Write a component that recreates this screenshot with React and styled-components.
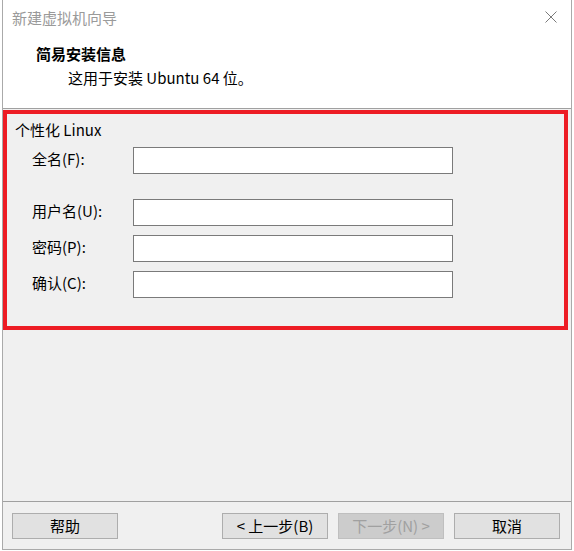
import React from "react";
import styled, { createGlobalStyle } from "styled-components";

const Global = createGlobalStyle`
  html, body { margin: 0; padding: 0; background: #ffffff; }
  body { font-family: "Noto Sans CJK SC", "Noto Sans", sans-serif; color: #000; }
  * { box-sizing: border-box; }
`;

const Window = styled.div`
  margin-left: 2px;
  width: 570px;
  height: 550px;
  display: flex;
  flex-direction: column;
  border-left: 1px solid #aaaaaa;
  border-right: 1px solid #aaaaaa;
  border-bottom: 1px solid #aaaaaa;
  background: #f0f0f0;
`;

const Header = styled.div`
  height: 109px;
  background: #ffffff;
  border-bottom: 1px solid #a0a0a0;
  display: flex;
  flex-direction: column;
`;

const TitleBar = styled.div`
  height: 36px;
  display: flex;
  align-items: center;
  justify-content: space-between;
  padding: 0 14px 0 9px;
`;

const Title = styled.div`
  font-size: 15px;
  line-height: 20px;
  color: #9a9a9a;
`;

const CloseButton = styled.div`
  width: 12px;
  height: 12px;
  display: flex;
  margin-top: -2px;
`;

const Heading = styled.div`
  margin: 8px 0 0 33px;
  font-size: 15px;
  font-weight: 700;
  line-height: 20px;
`;

const Subtitle = styled.div`
  margin: 4px 0 0 65px;
  font-size: 15px;
  line-height: 20px;
`;

const Content = styled.div`
  flex: 1;
  padding-top: 1px;
  background: #f0f0f0;
`;

const GroupBox = styled.div`
  width: 565px;
  height: 220px;
  border: 4px solid #ed1c24;
  padding: 6px 0 0 8px;
`;

const GroupTitle = styled.div`
  font-size: 15px;
  line-height: 19px;
`;

const Form = styled.div`
  margin-top: 8px;
  padding-left: 17px;
  display: grid;
  grid-template-columns: 101px 320px;
  row-gap: 9px;
`;

const Label = styled.label`
  font-size: 15px;
  line-height: 19px;
  align-self: center;
  padding-bottom: 5px;
  margin-bottom: ${(p) => (p.$spaced ? "16px" : "0")};
`;

const Input = styled.input`
  width: 320px;
  height: 27px;
  border: 1px solid #7a7a7a;
  background: #ffffff;
  margin: 0 0 ${(p) => (p.$spaced ? "16px" : "0")} 0;
  padding: 0 4px;
  font: inherit;
  font-size: 15px;
  outline: none;
`;

const Footer = styled.div`
  height: 48px;
  border-top: 1px solid #a0a0a0;
  padding: 11px 11px 0 9px;
  display: flex;
  align-items: flex-start;
  justify-content: space-between;
`;

const ButtonGroup = styled.div`
  display: flex;
  gap: 10px;
`;

const Button = styled.button`
  width: 106px;
  height: 26px;
  padding: 0;
  font-family: "Noto Sans CJK SC", "Noto Sans", sans-serif;
  font-size: 15px;
  line-height: 24px;
  background: ${(p) => (p.disabled ? "#cccccc" : "#e1e1e1")};
  border: 1px solid ${(p) => (p.disabled ? "#bfbfbf" : "#adadad")};
  color: ${(p) => (p.disabled ? "#a0a0a0" : "#000000")};
  border-radius: 0;
`;

const fields = [
  { label: "全名(F):", spaced: true },
  { label: "用户名(U):" },
  { label: "密码(P):", type: "password" },
  { label: "确认(C):", type: "password" },
];

export default function App() {
  return (
    <>
      <Global />
      <Window>
        <Header>
          <TitleBar>
            <Title>新建虚拟机向导</Title>
            <CloseButton>
              <svg width="12" height="12" viewBox="0 0 12 12">
                <path d="M0.5 0.5 L11.5 11.5 M11.5 0.5 L0.5 11.5" stroke="#7a7a7a" strokeWidth="1" fill="none" />
              </svg>
            </CloseButton>
          </TitleBar>
          <Heading>简易安装信息</Heading>
          <Subtitle>这用于安装 Ubuntu 64 位。</Subtitle>
        </Header>
        <Content>
          <GroupBox>
            <GroupTitle>个性化 Linux</GroupTitle>
            <Form>
              {fields.map((f) => (
                <React.Fragment key={f.label}>
                  <Label $spaced={f.spaced}>{f.label}</Label>
                  <Input $spaced={f.spaced} type={f.type || "text"} />
                </React.Fragment>
              ))}
            </Form>
          </GroupBox>
        </Content>
        <Footer>
          <Button>帮助</Button>
          <ButtonGroup>
            <Button>&lt; 上一步(B)</Button>
            <Button disabled>下一步(N) &gt;</Button>
            <Button>取消</Button>
          </ButtonGroup>
        </Footer>
      </Window>
    </>
  );
}
